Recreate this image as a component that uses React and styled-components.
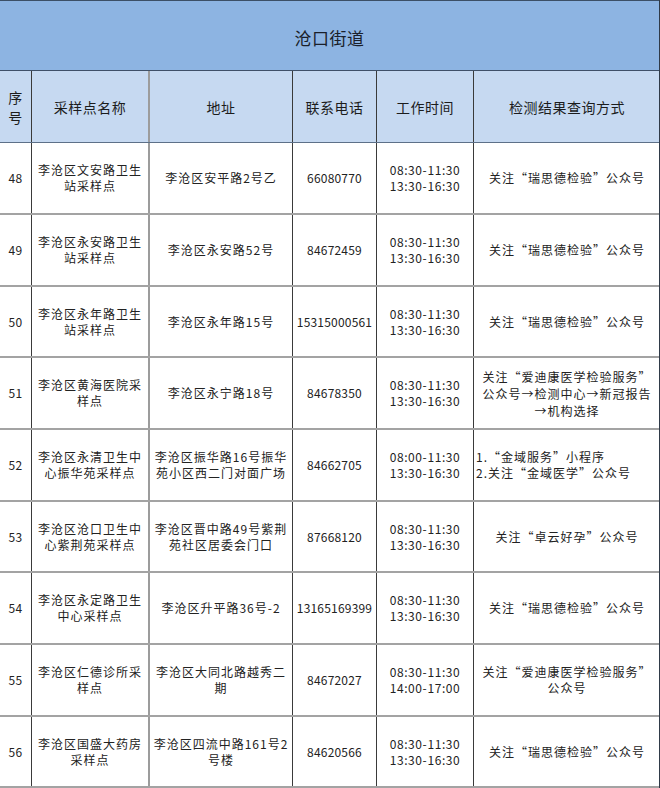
import React from "react";
import styled, { createGlobalStyle } from "styled-components";

const GlobalStyle = createGlobalStyle`
  html, body {
    margin: 0;
    padding: 0;
    background: #ffffff;
  }
  body {
    font-family: "Noto Sans CJK SC", "Noto Sans", sans-serif;
    color: #222222;
  }
`;

const rows = [
  { no: "48", name: ["李沧区文安路卫生", "站采样点"], addr: ["李沧区安平路2号乙"], tel: "66080770", time: ["08:30-11:30", "13:30-16:30"], result: ["关注“瑞思德检验”公众号"], h: 72 },
  { no: "49", name: ["李沧区永安路卫生", "站采样点"], addr: ["李沧区永安路52号"], tel: "84672459", time: ["08:30-11:30", "13:30-16:30"], result: ["关注“瑞思德检验”公众号"], h: 72 },
  { no: "50", name: ["李沧区永年路卫生", "站采样点"], addr: ["李沧区永年路15号"], tel: "15315000561", time: ["08:30-11:30", "13:30-16:30"], result: ["关注“瑞思德检验”公众号"], h: 71 },
  { no: "51", name: ["李沧区黄海医院采", "样点"], addr: ["李沧区永宁路18号"], tel: "84678350", time: ["08:30-11:30", "13:30-16:30"], result: ["关注“爱迪康医学检验服务”", "公众号→检测中心→新冠报告", "→机构选择"], h: 72 },
  { no: "52", name: ["李沧区永清卫生中", "心振华苑采样点"], addr: ["李沧区振华路16号振华", "苑小区西二门对面广场"], tel: "84662705", time: ["08:00-11:30", "13:30-16:30"], result: ["1.“金域服务”小程序", "2.关注“金域医学”公众号"], left: true, h: 72 },
  { no: "53", name: ["李沧区沧口卫生中", "心紫荆苑采样点"], addr: ["李沧区晋中路49号紫荆", "苑社区居委会门口"], tel: "87668120", time: ["08:30-11:30", "13:30-16:30"], result: ["关注“卓云好孕”公众号"], h: 71 },
  { no: "54", name: ["李沧区永定路卫生", "中心采样点"], addr: ["李沧区升平路36号-2"], tel: "13165169399", time: ["08:30-11:30", "13:30-16:30"], result: ["关注“瑞思德检验”公众号"], h: 72 },
  { no: "55", name: ["李沧区仁德诊所采", "样点"], addr: ["李沧区大同北路越秀二", "期"], tel: "84672027", time: ["08:30-11:30", "14:00-17:00"], result: ["关注“爱迪康医学检验服务”", "公众号"], h: 72 },
  { no: "56", name: ["李沧区国盛大药房", "采样点"], addr: ["李沧区四流中路161号2", "号楼"], tel: "84620566", time: ["08:30-11:30", "13:30-16:30"], result: ["关注“瑞思德检验”公众号"], h: 71 },
];

const COLS = "32px 118px 143px 84px 97px 186px";

const Sheet = styled.div`
  width: 660px;
  height: 788px;
  overflow: hidden;
  box-sizing: border-box;
  border-right: 1px solid #2f3a48;
`;

const TitleBar = styled.div`
  height: 71px;
  box-sizing: border-box;
  display: flex;
  align-items: center;
  justify-content: center;
  background: #8db4e2;
  border-top: 1px solid #3c4f66;
  border-bottom: 1px solid #3f5068;
  font-size: 17px;
  color: #1a1f2a;
  letter-spacing: 0.5px;
  padding-top: 4px;
`;

const Row = styled.div`
  display: grid;
  grid-template-columns: ${COLS};
  height: ${(p) => p.$h}px;
  background: ${(p) => (p.$head ? "#c6d9f1" : "#ffffff")};
  box-sizing: border-box;
  border-bottom: ${(p) => (p.$head ? "1px solid #5d7088" : "2px solid #a3a3a3")};
`;

const Cell = styled.div`
  display: flex;
  flex-direction: column;
  justify-content: center;
  align-items: ${(p) => (p.$left ? "flex-start" : "center")};
  text-align: ${(p) => (p.$left ? "left" : "center")};
  box-sizing: border-box;
  padding: 0 ${(p) => (p.$left ? "2px" : "0")};
  border-right: ${(p) => (p.$soft ? "2px solid #9c9c9c" : "1px solid #3a3a3a")};
  font-size: ${(p) => (p.$head ? "14px" : "12px")};
  letter-spacing: ${(p) => (p.$head ? "0.5px" : p.$num ? `${p.$num}px` : "1px")};
  line-height: ${(p) => (p.$head ? "20px" : p.$tall ? "17px" : "16px")};
  color: ${(p) => (p.$head ? "#1c1c1c" : "#222222")};
  white-space: nowrap;

  &:last-child {
    border-right: none;
  }
`;

const Lines = ({ items }) => items.map((t, i) => <span key={i}>{t}</span>);

export default function App() {
  return (
    <>
      <GlobalStyle />
      <Sheet>
        <TitleBar>沧口街道</TitleBar>
        <Row $head $h={72}>
          <Cell $head>
            <span>序</span>
            <span>号</span>
          </Cell>
          <Cell $head $soft>采样点名称</Cell>
          <Cell $head>地址</Cell>
          <Cell $head>联系电话</Cell>
          <Cell $head>工作时间</Cell>
          <Cell $head>检测结果查询方式</Cell>
        </Row>
        {rows.map((r) => (
          <Row key={r.no} $h={r.h}>
            <Cell $num={0.3}>{r.no}</Cell>
            <Cell $soft>
              <Lines items={r.name} />
            </Cell>
            <Cell>
              <Lines items={r.addr} />
            </Cell>
            <Cell $num={0.2}>{r.tel}</Cell>
            <Cell $num={0.6}>
              <Lines items={r.time} />
            </Cell>
            <Cell $left={r.left} $tall={r.result.length > 2}>
              <Lines items={r.result} />
            </Cell>
          </Row>
        ))}
      </Sheet>
    </>
  );
}
